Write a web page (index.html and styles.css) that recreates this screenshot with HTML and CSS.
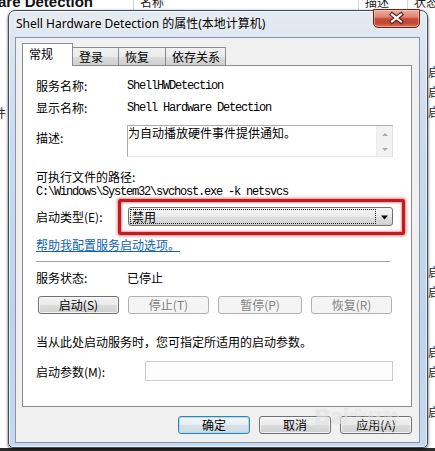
FILE: index.html
```html
<!DOCTYPE html>
<html lang="zh-CN">
<head>
<meta charset="utf-8">
<title>Shell Hardware Detection 的属性(本地计算机)</title>
<link rel="stylesheet" href="styles.css">
</head>
<body>
<div class="bgwin">
  <div class="bg-left">
    <div class="bg-name">are Detection</div>
    <div class="bg-leftrow">件</div>
  </div>
  <div class="bg-list">
    <div class="bg-head">
      <span class="col col-name">名称</span>
      <span class="col col-desc">描述</span>
      <span class="col col-state">状态</span>
    </div>
    <div class="bg-rows">
      <div class="bg-row">启</div>
      <div class="bg-row">启</div>
      <div class="bg-row">启</div>
      <div class="bg-row"></div>
      <div class="bg-row"></div>
      <div class="bg-row"></div>
      <div class="bg-row"></div>
      <div class="bg-row"></div>
      <div class="bg-row"></div>
      <div class="bg-row"></div>
      <div class="bg-row">启</div>
      <div class="bg-row">启</div>
      <div class="bg-row"></div>
      <div class="bg-row"></div>
      <div class="bg-row">启</div>
      <div class="bg-row">启</div>
      <div class="bg-row"></div>
      <div class="bg-row">启</div>
    </div>
  </div>
</div>

<div class="dialog">
  <div class="titlebar">
    <span class="title">Shell Hardware Detection 的属性(本地计算机)</span>
  </div>
  <div class="close">
    <svg width="47" height="19" viewBox="0 0 47 19">
      <path d="M19 5.5 L28 12.5 M28 5.5 L19 12.5" stroke="#5a1a12" stroke-width="4.2" stroke-linecap="square" fill="none"/>
      <path d="M19 5.5 L28 12.5 M28 5.5 L19 12.5" stroke="#ffffff" stroke-width="2.2" stroke-linecap="square" fill="none"/>
    </svg>
  </div>

  <div class="client">
    <div class="tabs">
      <div class="tab active">常规</div>
      <div class="tab">登录</div>
      <div class="tab">恢复</div>
      <div class="tab">依存关系</div>
    </div>
    <div class="panel">
      <div class="row row-name">
        <span class="label">服务名称:</span>
        <span class="mono">ShellHWDetection</span>
      </div>
      <div class="row row-name">
        <span class="label">显示名称:</span>
        <span class="mono">Shell Hardware Detection</span>
      </div>
      <div class="row row-desc">
        <span class="label label-desc">描述:</span>
        <div class="textarea">
          <div class="textarea-text">为自动播放硬件事件提供通知。</div>
          <div class="scrollbar">
            <svg width="16" height="30" viewBox="0 0 16 30">
              <path d="M5 10 L8 7 L11 10 Z" fill="#a9a9a9"/>
              <path d="M5 22 L8 25 L11 22 Z" fill="#a9a9a9"/>
            </svg>
          </div>
        </div>
      </div>
      <div class="line line-path-label">可执行文件的路径:</div>
      <div class="line mono line-path">C:\Windows\System32\svchost.exe -k netsvcs</div>
      <div class="row row-start">
        <span class="label">启动类型(E):</span>
        <div class="combo">
          <div class="combo-value">禁用</div>
          <div class="combo-arrow">
            <svg width="9" height="5" viewBox="0 0 9 5"><path d="M1 0.5 L8 0.5 L4.5 4.5 Z" fill="#000"/></svg>
          </div>
          <div class="highlight"></div>
        </div>
      </div>
      <div class="line line-link"><a class="link">帮助我配置服务启动选项。</a></div>
      <div class="sep"></div>
      <div class="line line-status">
        <span class="label">服务状态:</span>
        <span>已停止</span>
      </div>
      <div class="svc-buttons">
        <div class="btn btn-svc">启动(S)</div>
        <div class="btn btn-svc disabled">停止(T)</div>
        <div class="btn btn-svc btn-wide disabled">暂停(P)</div>
        <div class="btn btn-svc disabled">恢复(R)</div>
      </div>
      <div class="line line-note">当从此处启动服务时，您可指定所适用的启动参数。</div>
      <div class="row row-param">
        <span class="label label-param">启动参数(M):</span>
        <div class="input"></div>
      </div>
    </div>
    <div class="actions">
      <div class="btn btn-act default">确定</div>
      <div class="btn btn-act">取消</div>
      <div class="btn btn-act">应用(A)</div>
    </div>
  </div>
  <div class="watermark"><span class="wm-bai">Bai</span><span class="wm-paw">❀</span><span class="wm-jy">经验</span></div>
</div>
</body>
</html>
```

FILE: styles.css
```css
* { box-sizing: border-box; }
html, body { margin: 0; padding: 0; }
body {
  width: 435px;
  height: 451px;
  overflow: hidden;
  position: relative;
  background: #ffffff;
  font-family: "Noto Sans CJK SC", "Noto Sans", sans-serif;
  font-size: 12px;
  color: #000;
}

/* background window */
.bgwin {
  display: flex;
  width: 435px;
  height: 451px;
  background: #ffffff;
  border-bottom: 3px solid #2b2b2b;
}
.bg-left {
  width: 133px;
  flex: none;
}
.bg-name {
  margin-top: -6px;
  margin-left: -2px;
  font-family: "Liberation Sans", sans-serif;
  font-weight: bold;
  font-size: 15px;
  line-height: 16px;
  color: #111;
}
.bg-leftrow {
  margin-top: 95px;
  margin-left: -6px;
  line-height: 16px;
  color: #222;
}
.bg-list { flex: 1; display: flex; flex-direction: column; }
.bg-head {
  display: flex;
  height: 10px;
  border-left: 1px solid #d5d5d5;
  overflow: hidden;
}
.col {
  line-height: 12px;
  margin-top: -4px;
  color: #222;
  border-right: 1px solid #d5d5d5;
  padding-left: 6px;
}
.col-name { width: 225px; }
.col-desc { width: 49px; }
.col-state { flex: 1; border-right: none; }
.bg-rows { margin-top: 52px; padding-left: 295px; }
.bg-row { height: 20px; line-height: 20px; color: #222; }

/* dialog window */
.dialog {
  position: absolute;
  left: 8px;
  top: 10px;
  width: 420px;
  height: 438px;
  border: 1px solid #3e4f63;
  border-radius: 7px 7px 5px 5px;
  background: linear-gradient(180deg, #e6ebf1 0%, #dbe5f0 8%, #c9dbee 30%, #bfd4eb 70%, #c6d9ee 100%);
  box-shadow: 0 1px 3px rgba(0,0,0,0.7), inset 0 0 0 1px rgba(255,255,255,0.6);
  padding: 0 7px 4px 6px;
  display: flex;
  flex-direction: column;
}
.titlebar {
  height: 26px;
  display: flex;
  align-items: center;
  padding-left: 1px;
  flex: none;
}
.title {
  font-family: "Noto Sans", "Noto Sans CJK SC", sans-serif;
  font-size: 12px;
  line-height: 16px;
  color: #000;
  text-shadow: 0 0 6px rgba(255,255,255,0.9);
}
.close {
  position: absolute;
  top: -2px;
  right: 7px;
  width: 47px;
  height: 19px;
  border: 1px solid #6b2418;
  border-radius: 0 0 5px 5px;
  background: linear-gradient(180deg, #eab0a2 0%, #de8370 42%, #c54a33 52%, #c24a36 80%, #d97a60 100%);
  box-shadow: inset 0 0 0 1px rgba(255,210,200,0.5);
}
.close svg { display: block; margin: -1px 0 0 -1px; }

.client {
  flex: 1;
  border: 1px solid #8496ad;
  background: #f0f0f0;
  padding: 5px 7px 8px 6px;
  display: flex;
  flex-direction: column;
}
.tabs {
  display: flex;
  align-items: flex-end;
  height: 22px;
  flex: none;
}
.tab {
  height: 18px;
  line-height: 17px;
  padding-left: 6px;
  border: 1px solid #898c95;
  border-bottom: none;
  background: linear-gradient(180deg, #f2f2f2 0%, #ebebeb 50%, #dddddd 51%, #cfcfcf 100%);
  margin-left: -1px;
  color: #000;
}
.tab:nth-child(1) { width: 51px; }
.tab:nth-child(2) { width: 47px; }
.tab:nth-child(3) { width: 48px; }
.tab:nth-child(4) { width: 61px; }
.tab.active {
  height: 23px;
  line-height: 20px;
  margin-left: 0;
  margin-bottom: -1px;
  background: #ffffff;
  position: relative;
  z-index: 1;
}
.panel {
  height: 342px;
  flex: none;
  border: 1px solid #898c95;
  background: #ffffff;
  padding: 0 18px 0 13px;
  display: flex;
  flex-direction: column;
}
.row { display: flex; flex: none; }
.label { width: 91px; flex: none; }
.mono {
  font-family: "Liberation Mono", monospace;
  font-size: 12px;
  letter-spacing: -1.2px;
}
.row-name { height: 22px; line-height: 22px; }
.row-name:first-child { margin-top: 9px; }
.row-desc { margin-top: 6px; height: 32px; }
.label-desc { line-height: 14px; padding-top: 6px; }
.textarea {
  width: 266px;
  height: 32px;
  border: 1px solid #abadb3;
  border-right-color: #dbdfe6;
  border-bottom-color: #e3e9ef;
  background: #fff;
  display: flex;
}
.textarea-text { flex: 1; line-height: 14px; padding-left: 0; }
.scrollbar { width: 16px; background: #f2f2f2; border-left: 1px solid #ececec; }
.scrollbar svg { display: block; }

.line { height: 14px; line-height: 14px; flex: none; }
.line-path-label { margin-top: 13px; }
.line-path { margin-top: 1px; }
.row-start { margin-top: 8px; height: 19px; line-height: 19px; }
.combo {
  position: relative;
  width: 265px;
  height: 19px;
  margin-left: 1px;
  border: 1px solid #707070;
  border-radius: 3px;
  background: linear-gradient(180deg, #f3f3f3 0%, #ececec 50%, #dfdfdf 51%, #d2d2d2 100%);
  display: flex;
  align-items: center;
  padding: 0 0 0 1px;
}
.combo-value {
  width: 246px;
  height: 15px;
  border: 1px dotted #222;
  line-height: 13px;
  padding-left: 1px;
}
.combo-arrow { flex: 1; display: flex; justify-content: center; align-items: center; padding-top: 1px; }
.combo-arrow svg { display: block; }
.highlight {
  position: absolute;
  left: -11px;
  top: -9px;
  right: -13px;
  bottom: -10px;
  border: 3px solid #c8171d;
  border-radius: 2px;
  box-shadow: 0 0 3px 1px rgba(190,40,40,0.55), inset 0 0 2px 1px rgba(190,40,40,0.45);
}
.line-link { margin-top: 12px; }
.link { color: #0f63b3; text-decoration: underline; }
.sep {
  margin-top: 9px;
  height: 1px;
  width: 354px;
  background: #a0a0a0;
  flex: none;
}
.line-status { margin-top: 9px; display: flex; }
.svc-buttons {
  margin-top: 11px;
  display: flex;
  gap: 9px;
  padding-left: 2px;
  flex: none;
}
.btn {
  height: 18px;
  border: 1px solid #707070;
  border-radius: 3px;
  background: linear-gradient(180deg, #f2f2f2 0%, #ebebeb 50%, #dddddd 51%, #cfcfcf 100%);
  box-shadow: inset 0 0 0 1px rgba(255,255,255,0.7);
  text-align: center;
  line-height: 16px;
  color: #000;
  flex: none;
}
.btn-svc { width: 81px; }
.btn-wide { width: 84px; }
.btn.disabled {
  border-color: #adb2b5;
  background: #f4f4f4;
  box-shadow: none;
  color: #838383;
}
.line-note { margin-top: 21px; }
.row-param { margin-top: 12px; height: 20px; }
.label-param { width: 109px; line-height: 22px; }
.input {
  width: 248px;
  height: 20px;
  border: 1px solid #c9cbce;
  background: #fcfcfc;
}
.actions {
  margin-top: 9px;
  display: flex;
  justify-content: flex-end;
  gap: 9px;
}
.btn-act { width: 72px; }
.btn.default {
  border-color: #3c7fb1;
  background: linear-gradient(180deg, #f1f6f9 0%, #e6eef3 50%, #d6e2ea 51%, #cddbe4 100%);
  box-shadow: inset 0 0 0 1px #a8def5;
}

.watermark {
  position: absolute;
  left: 306px;
  top: 394px;
  display: flex;
  align-items: flex-end;
  pointer-events: none;
  color: rgba(255,255,255,0.5);
  text-shadow: 0 0 1px rgba(140,140,140,0.35);
}
.wm-bai { font-family: "Liberation Sans", sans-serif; font-weight: bold; font-size: 22px; line-height: 24px; }
.wm-paw { font-size: 18px; line-height: 24px; margin-top: -14px; }
.wm-jy { font-size: 16px; line-height: 22px; }
```
